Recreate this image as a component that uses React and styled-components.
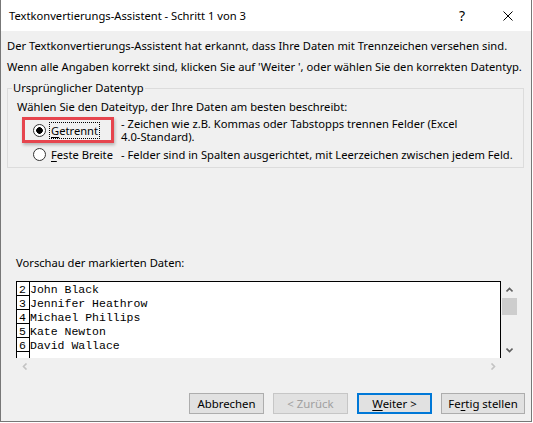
import React from "react";
import styled, { createGlobalStyle } from "styled-components";

const GlobalStyle = createGlobalStyle`
  html, body {
    margin: 0;
    padding: 0;
    background: #fff;
  }
  body {
    font-family: "Noto Sans", "Liberation Sans", sans-serif;
    font-size: 11.2px;
    color: #000;
  }
`;

const rows = [
  { num: "2", name: "John Black" },
  { num: "3", name: "Jennifer Heathrow" },
  { num: "4", name: "Michael Phillips" },
  { num: "5", name: "Kate Newton" },
  { num: "6", name: "David Wallace" },
  { num: "", name: "" },
];

function Chevron({ dir, color }) {
  const pts = {
    up: "0.5,4.5 3.5,1.5 6.5,4.5",
    down: "0.5,1.5 3.5,4.5 6.5,1.5",
    left: "4.5,0.5 1.5,3.5 4.5,6.5",
    right: "1.5,0.5 4.5,3.5 1.5,6.5",
  }[dir];
  const vertical = dir === "up" || dir === "down";
  return (
    <svg width={vertical ? 7 : 6} height={vertical ? 6 : 7} viewBox={vertical ? "0 0 7 6" : "0 0 6 7"}>
      <polyline points={pts} fill="none" stroke={color} strokeWidth="1.6" />
    </svg>
  );
}

function App() {
  return (
    <>
      <GlobalStyle />
      <Window>
        <TitleBar>
          <Title>Textkonvertierungs-Assistent - Schritt 1 von 3</Title>
          <TitleButtons>
            <TitleButton>?</TitleButton>
            <TitleButton>
              <svg width="10" height="10" viewBox="0 0 10 10">
                <path d="M0.5 0.5 L9.5 9.5 M9.5 0.5 L0.5 9.5" stroke="#000" strokeWidth="1" />
              </svg>
            </TitleButton>
          </TitleButtons>
        </TitleBar>

        <Intro>
          <p>Der Textkonvertierungs-Assistent hat erkannt, dass Ihre Daten mit Trennzeichen versehen sind.</p>
          <p>Wenn alle Angaben korrekt sind, klicken Sie auf 'Weiter ', oder wählen Sie den korrekten Datentyp.</p>
        </Intro>

        <GroupBox>
          <Legend>Ursprünglicher Datentyp</Legend>
          <Prompt>Wählen Sie den Dateityp, der Ihre Daten am besten beschreibt:</Prompt>
          <Options>
            <OptionLabel highlighted>
              <Radio checked />
              <AccessText focused>
                <u>G</u>etrennt
              </AccessText>
            </OptionLabel>
            <Desc>
              - Zeichen wie z.B. Kommas oder Tabstopps trennen Felder (Excel
              <br />
              4.0-Standard).
            </Desc>
            <OptionLabel>
              <Radio />
              <AccessText>
                <u>F</u>este Breite
              </AccessText>
            </OptionLabel>
            <Desc>- Felder sind in Spalten ausgerichtet, mit Leerzeichen zwischen jedem Feld.</Desc>
          </Options>
        </GroupBox>

        <PreviewLabel>Vorschau der markierten Daten:</PreviewLabel>
        <Preview>
          <DataArea>
            {rows.map((r, i) => (
              <DataRow key={i}>
                <NumCell>{r.num}</NumCell>
                <NameCell>{r.name}</NameCell>
              </DataRow>
            ))}
          </DataArea>
          <VScroll>
            <ScrollArrow>
              <Chevron dir="up" color="#606060" />
            </ScrollArrow>
            <Thumb />
            <Track />
            <ScrollArrow>
              <Chevron dir="down" color="#606060" />
            </ScrollArrow>
          </VScroll>
          <HScroll>
            <ScrollArrow>
              <Chevron dir="left" color="#c3c3c3" />
            </ScrollArrow>
            <ScrollArrow>
              <Chevron dir="right" color="#c3c3c3" />
            </ScrollArrow>
          </HScroll>
        </Preview>

        <ButtonRow>
          <Button>Abbrechen</Button>
          <Button disabled>&lt; Zurück</Button>
          <Button primary>
            <u>W</u>eiter &gt;
          </Button>
          <Button wide>
            Fe<u>r</u>tig stellen
          </Button>
        </ButtonRow>
      </Window>
    </>
  );
}

const Window = styled.div`
  width: 532px;
  height: 422px;
  box-sizing: border-box;
  border: 1px solid #777;
  border-top: none;
  background: #f0f0f0;
  display: flex;
  flex-direction: column;
  white-space: nowrap;
  overflow: hidden;
`;

const TitleBar = styled.div`
  height: 31px;
  flex: none;
  background: #fff;
  display: flex;
  align-items: center;
  padding-left: 8px;
`;

const Title = styled.span`
  font-size: 11.2px;
`;

const TitleButtons = styled.div`
  margin-left: auto;
  display: flex;
  height: 100%;
`;

const TitleButton = styled.div`
  width: 46px;
  height: 100%;
  display: flex;
  align-items: center;
  justify-content: center;
  font-size: 14px;
`;

const Intro = styled.div`
  flex: none;
  padding: 4px 0 0 6px;
  line-height: 21px;
  p {
    margin: 0;
  }
`;

const GroupBox = styled.fieldset`
  flex: none;
  margin: 3px 7px 0 6px;
  padding: 3px 0 4px 9px;
  border: 1px solid #dcdcdc;
  min-width: 0;
`;

const Legend = styled.legend`
  padding: 0 1px;
  margin-left: -5px;
  line-height: 16px;
`;

const Prompt = styled.div`
  line-height: 16px;
`;

const Options = styled.div`
  display: grid;
  grid-template-columns: 88px 1fr;
  row-gap: 3px;
  align-items: center;
  margin: 2px 0 0 16px;
`;

const OptionLabel = styled.label`
  position: relative;
  justify-self: start;
  display: inline-flex;
  align-items: center;
  gap: 3px;
  ${({ highlighted }) =>
    highlighted &&
    `
    &::after {
      content: "";
      position: absolute;
      top: -5px;
      bottom: -4px;
      left: -11px;
      right: -14px;
      border: 3px solid #e6454e;
      box-shadow: 1px 2px 3px rgba(0, 0, 0, 0.25);
      pointer-events: none;
    }
  `}
`;

const Radio = styled.span`
  width: 13px;
  height: 13px;
  box-sizing: border-box;
  border: 1px solid #333;
  border-radius: 50%;
  background: ${({ checked }) =>
    checked ? "radial-gradient(circle, #000 0 3px, #fff 3.6px)" : "#fff"};
`;

const AccessText = styled.span`
  padding: 0 1px;
  line-height: 15px;
  border: 1px dotted ${({ focused }) => (focused ? "#000" : "transparent")};
  u {
    text-underline-offset: 2px;
  }
`;

const Desc = styled.div`
  line-height: 13px;
`;

const PreviewLabel = styled.div`
  flex: none;
  margin: 87px 0 0 15px;
  line-height: 16px;
`;

const Preview = styled.div`
  flex: none;
  margin: 10px 0 0 15px;
  width: 502px;
  height: 94px;
  display: grid;
  grid-template-columns: 1fr 17px;
  grid-template-rows: 1fr 17px;
`;

const DataArea = styled.div`
  background: #fff;
  border: 1px solid #000;
  border-bottom: none;
  overflow: hidden;
`;

const DataRow = styled.div`
  display: flex;
  height: 14px;
`;

const NumCell = styled.div`
  width: 13px;
  flex: none;
  padding-left: 2px;
  box-sizing: border-box;
  border-right: 1px solid #000;
  border-bottom: 1px solid #000;
  font-family: "Liberation Mono", monospace;
  font-size: 11.5px;
  line-height: 16px;
  height: 14px;
`;

const NameCell = styled.div`
  font-family: "Liberation Mono", monospace;
  font-size: 11.5px;
  line-height: 16px;
  white-space: pre;
`;

const VScroll = styled.div`
  display: flex;
  flex-direction: column;
`;

const HScroll = styled.div`
  display: flex;
  justify-content: space-between;
`;

const ScrollArrow = styled.div`
  width: 17px;
  height: 17px;
  display: flex;
  align-items: center;
  justify-content: center;
`;

const Thumb = styled.div`
  height: 17px;
  margin: 0 1px;
  background: #cdcdcd;
`;

const Track = styled.div`
  flex: 1;
`;

const ButtonRow = styled.div`
  margin-top: auto;
  display: flex;
  justify-content: flex-end;
  gap: 9px;
  padding: 0 6px 7px 0;
`;

const Button = styled.button`
  width: ${({ wide }) => (wide ? "84px" : "75px")};
  height: 21px;
  box-sizing: border-box;
  padding: 0;
  font-family: inherit;
  font-size: 11.4px;
  color: #000;
  background: #e1e1e1;
  border: ${({ primary }) => (primary ? "2px solid #0078d7" : "1px solid #adadad")};
  &:disabled {
    color: #a0a0a0;
    border-color: #c6c6c6;
    background: #e1e1e1;
  }
  u {
    text-underline-offset: 2px;
  }
`;

export default App;
